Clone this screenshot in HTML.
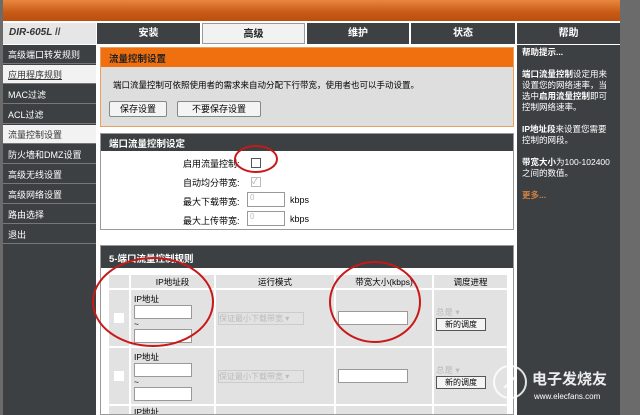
<!DOCTYPE html>
<html><head><meta charset="utf-8"><style>
*{margin:0;padding:0;box-sizing:border-box}
body{width:640px;height:415px;overflow:hidden;background:#6b6b6b;font-family:"Liberation Sans","Noto Sans CJK SC",sans-serif;font-size:9px;position:relative}
.a{position:absolute}
.banner{left:3px;top:0;width:617px;height:21px;background:linear-gradient(180deg,#e8863f,#c85a14 60%,#b94f10)}
.navbg{left:3px;top:21px;width:617px;height:394px;background:#fff}
.logo{left:3px;top:23px;width:93px;height:21px;background:#e6e6e6;font-style:italic;font-weight:bold;color:#333;font-size:10px;padding:4px 0 0 6px}
.tab{top:23px;height:21px;background:#3e4143;color:#fff;font-weight:bold;text-align:center;line-height:21px;font-size:10px}
.side{left:3px;top:45px;width:93px;height:370px;background:#3d4042}
.si{left:3px;width:93px;height:19px;color:#fff;padding:3px 0 0 5px;font-size:9px;border-bottom:1px solid #777}
.si.l{background:#f2f2f2;color:#333}
.help{left:517px;top:45px;width:103px;height:370px;background:#3d4042;color:#fff;padding:2px 5px;font-size:8.5px;line-height:11px}
.box1{left:100px;top:47px;width:414px;height:80px;background:#dedede;border:1px solid #e8a060}
.oh{background:#f07010;color:#222;font-weight:bold;height:19px;padding:3px 8px;font-size:9.5px}
.dh{background:#3d4042;color:#fff;font-weight:bold;padding:3px 8px;font-size:9.5px}
.btn{position:absolute;height:16px;border:1px solid #888;border-radius:2px;background:#f4f4f4;text-align:center;line-height:14px;font-size:9px}
.inp{position:absolute;height:15px;background:#fff;border:1px solid #999}
td{background:#e2e2e2;border:2px solid #fff;font-size:8.5px;vertical-align:middle}
</style></head><body>
<div class="a banner"></div>
<div class="a navbg"></div>
<div class="a logo">DIR-605L <span style="font-style:normal;color:#444">//</span></div>
<div class="a tab" style="left:97px;width:103px">安装</div>
<div class="a tab" style="left:202px;width:103px;background:#f2f2f2;color:#222;border:1px solid #999">高级</div>
<div class="a tab" style="left:307px;width:102px">维护</div>
<div class="a tab" style="left:411px;width:104px">状态</div>
<div class="a tab" style="left:517px;width:103px">帮助</div>
<div class="a side"></div>
<div class="a si" style="top:45px">高级端口转发规则</div>
<div class="a si l" style="top:65px;text-decoration:underline">应用程序规则</div>
<div class="a si" style="top:85px">MAC过滤</div>
<div class="a si" style="top:105px">ACL过滤</div>
<div class="a si l" style="top:125px">流量控制设置</div>
<div class="a si" style="top:145px">防火墙和DMZ设置</div>
<div class="a si" style="top:165px">高级无线设置</div>
<div class="a si" style="top:185px">高级网络设置</div>
<div class="a si" style="top:205px">路由选择</div>
<div class="a si" style="top:225px">退出</div>
<div class="a help"><b>帮助提示...</b><br><br><b>端口流量控制</b>设定用来设置您的网络速率，当选中<b>启用流量控制</b>即可控制网络速率。<br><br><b>IP地址段</b>来设置您需要控制的网段。<br><br><b>带宽大小</b>为100-102400之间的数值。<br><br><b style="color:#d08040">更多...</b></div>
<div class="a box1"><div class="oh">流量控制设置</div>
<div style="padding:12px 0 0 12px;font-size:8.5px">端口流量控制可依照使用者的需求来自动分配下行带宽，使用者也可以手动设置。</div>
<div class="btn" style="left:8px;top:53px;width:58px">保存设置</div>
<div class="btn" style="left:76px;top:53px;width:84px">不要保存设置</div></div>
<div class="a" style="left:100px;top:133px;width:414px;height:97px;border:1px solid #999;background:#fff"><div class="dh" style="height:17px;padding-top:2px">端口流量控制设定</div>
<div class="a" style="left:82px;top:23px">启用流量控制:</div>
<div class="a" style="left:150px;top:24px;width:10px;height:10px;border:1px solid #555"></div>
<div class="a" style="left:82px;top:42px">自动均分带宽:</div>
<div class="a" style="left:150px;top:43px;width:10px;height:10px;border:1px solid #bbb;color:#aaa;font-size:8px;line-height:8px">✓</div>
<div class="a" style="left:82px;top:61px">最大下载带宽:</div>
<div class="inp" style="left:146px;top:58px;width:38px;color:#bbb;font-size:8px;padding-left:2px">0</div><div class="a" style="left:189px;top:61px">kbps</div>
<div class="a" style="left:82px;top:80px">最大上传带宽:</div>
<div class="inp" style="left:146px;top:77px;width:38px;color:#bbb;font-size:8px;padding-left:2px">0</div><div class="a" style="left:189px;top:80px">kbps</div>
</div>
<div class="a" style="left:100px;top:245px;width:414px;height:170px;border:1px solid #999;background:#fff;overflow:hidden"><div class="dh" style="height:22px;padding-top:5px">5-端口流量控制规则</div>
<table class="a" style="left:6px;top:27px;width:402px;border-collapse:collapse">
<tr style="height:15px;text-align:center"><td style="width:22px"></td><td style="width:85px">IP地址段</td><td style="width:120px">运行模式</td><td style="width:98px">带宽大小(kbps)</td><td>调度进程</td></tr>
<tr style="height:58px"><td><div style="width:10px;height:10px;background:#fff;margin:auto"></div></td><td style="padding-left:3px">IP地址<div style="width:58px;height:14px;background:#fff;border:1px solid #999"></div>~<div style="width:58px;height:14px;background:#fff;border:1px solid #999"></div></td><td><div style="width:86px;height:13px;border:1px solid #ccc;color:#bbb;font-size:8px;margin-left:2px">保证最小下载带宽 ▾</div></td><td><div style="width:70px;height:14px;background:#fff;border:1px solid #999;margin-left:2px"></div></td><td style="padding-left:2px"><div style="color:#bbb">总是 ▾</div><div style="width:50px;height:13px;border:1px solid #555;background:#f4f4f4;text-align:center;font-size:8px">新的调度</div></td></tr>
<tr style="height:58px"><td><div style="width:10px;height:10px;background:#fff;margin:auto"></div></td><td style="padding-left:3px">IP地址<div style="width:58px;height:14px;background:#fff;border:1px solid #999"></div>~<div style="width:58px;height:14px;background:#fff;border:1px solid #999"></div></td><td><div style="width:86px;height:13px;border:1px solid #ccc;color:#bbb;font-size:8px;margin-left:2px">保证最小下载带宽 ▾</div></td><td><div style="width:70px;height:14px;background:#fff;border:1px solid #999;margin-left:2px"></div></td><td style="padding-left:2px"><div style="color:#bbb">总是 ▾</div><div style="width:50px;height:13px;border:1px solid #555;background:#f4f4f4;text-align:center;font-size:8px">新的调度</div></td></tr>
<tr style="height:20px"><td></td><td style="padding-left:3px;vertical-align:top">IP地址</td><td></td><td></td><td></td></tr>
</table></div>
<svg class="a" style="left:0;top:0" width="640" height="415"><g fill="none" stroke="#c81818" stroke-width="2"><ellipse cx="153" cy="302" rx="60" ry="44"/><ellipse cx="375" cy="302" rx="45" ry="40"/><ellipse cx="256" cy="159" rx="21" ry="13"/></g>
<g fill="none" stroke="#fff" stroke-width="2" opacity=".85"><circle cx="510" cy="382" r="16"/><line x1="504" y1="388" x2="516" y2="376"/></g></svg>
<div class="a" style="left:532px;top:368px;color:#fff;font-size:15px;font-weight:bold;opacity:.9">电子发烧友</div>
<div class="a" style="left:534px;top:392px;color:#fff;font-size:8px">www.elecfans.com</div>
</body></html>
